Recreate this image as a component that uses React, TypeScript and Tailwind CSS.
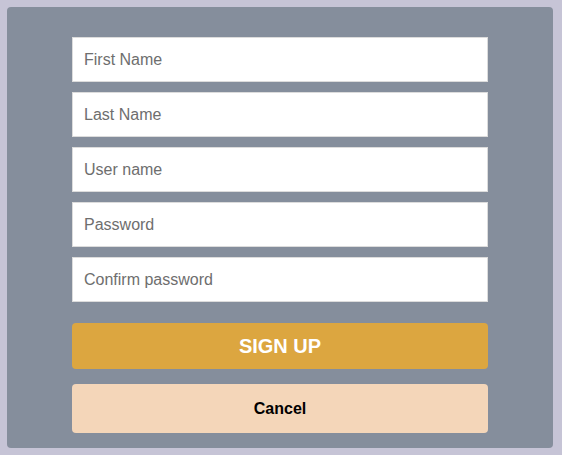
export default function App() {
  const fields = ["First Name", "Last Name", "User name", "Password", "Confirm password"];
  return (
    <div className="min-h-[455px] w-full bg-[#c6c4d6] p-[7px] font-['Liberation_Sans',Arial,sans-serif]">
      <div className="w-[546px] h-[441px] rounded-[4px] bg-[#858e9c] pt-[30px] px-[65px]">
        <form className="flex flex-col" onSubmit={(e) => e.preventDefault()}>
          {fields.map((f) => (
            <input
              key={f}
              type={f.toLowerCase().includes("password") ? "password" : "text"}
              placeholder={f}
              className="mb-[10px] h-[45px] w-[416px] border border-[#dcdcdc] bg-white px-[11px] text-[16px] text-[#333] placeholder:text-[#6e6e6e] outline-none"
            />
          ))}
          <button
            type="submit"
            className="mt-[11px] h-[46px] w-[416px] rounded-[4px] bg-[#dca640] text-[20px] font-bold text-white"
          >
            SIGN UP
          </button>
          <button
            type="button"
            className="mt-[15px] h-[49px] w-[416px] rounded-[4px] bg-[#f4d6b9] text-[16px] font-bold text-black"
          >
            Cancel
          </button>
        </form>
      </div>
    </div>
  );
}
